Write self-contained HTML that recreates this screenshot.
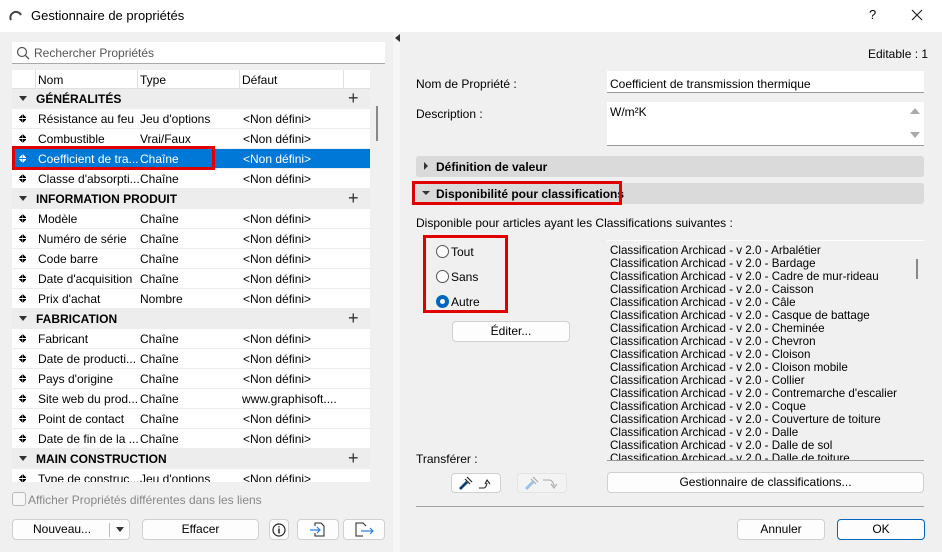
<!DOCTYPE html>
<html><head><meta charset="utf-8">
<style>
*{box-sizing:border-box;margin:0;padding:0}
body{width:942px;height:552px;overflow:hidden;background:#f0f0f0;font-family:"Liberation Sans",sans-serif;font-size:12px;color:#000;position:relative}
.a{position:absolute}
.title{left:0;top:0;width:942px;height:32px;background:#fff}
.list{left:12px;top:70px;width:358px;height:412px;background:#fff;overflow:hidden}
.hdr{position:absolute;left:0;top:0;width:358px;height:19px;background:#fff;border-bottom:1px solid #e0e0e0}
.hdr span{position:absolute;top:3px}
.hdr i{position:absolute;top:0;width:1px;height:19px;background:#e0e0e0}
.row{position:absolute;left:0;width:358px;height:20px;border-bottom:1px solid #ececec;background:#fff}
.row span{position:absolute;top:3px;white-space:nowrap}
.row .s{left:7px;top:5px;width:7px;height:9px;background:
linear-gradient(to bottom right,transparent 50%,currentColor 50%) 0 0/3.5px 4px no-repeat,
linear-gradient(to bottom left,transparent 50%,currentColor 50%) 3.5px 0/3.5px 4px no-repeat,
linear-gradient(to top right,transparent 50%,currentColor 50%) 0 5px/3.5px 4px no-repeat,
linear-gradient(to top left,transparent 50%,currentColor 50%) 3.5px 5px/3.5px 4px no-repeat}
.grp{position:absolute;left:0;width:358px;height:20px;background:#ededed;font-weight:bold}
.grp span{position:absolute;top:3px}
.grp .t{left:7px;top:7px;width:0;height:0;border-left:4px solid transparent;border-right:4px solid transparent;border-top:5px solid #333}
.grp .p{left:336px;top:-1px;font-weight:normal;font-size:18px;color:#333}
.sel{background:#0078d7;color:#fff}
.btn{position:absolute;background:#fdfdfd;border:1px solid #d0d0d0;border-radius:4px;text-align:center;line-height:19px;height:21px}
.inp{position:absolute;background:#fff;border-bottom:1px solid #999}
.bar{position:absolute;left:416px;width:508px;height:21px;background:#dadada;border-radius:3px;font-weight:bold}
.radio{position:absolute;left:436px;width:13px;height:13px;border:1px solid #555;border-radius:50%;background:#fff}
.red{position:absolute;border:3px solid #e00000}
.cl{position:absolute;left:610px;white-space:nowrap;line-height:13px;font-size:11.6px}
</style></head><body>
<div class="a title"></div>
<svg class="a" style="left:9px;top:9px" width="14" height="12"><path d="M2 11 A5.5 5.5 0 0 1 12 6" fill="none" stroke="#444" stroke-width="2"/></svg>
<div class="a" style="left:31px;top:8px;font-size:13px">Gestionnaire de propriétés</div>
<div class="a" style="left:869px;top:7px;font-size:13px">?</div>
<svg class="a" style="left:911px;top:9px" width="12" height="12"><path d="M1 1L11 11M11 1L1 11" stroke="#222" stroke-width="1.2"/></svg>

<div class="a" style="left:12px;top:42px;width:373px;height:22px;background:#fff;border-bottom:1px solid #aaa"></div>
<svg class="a" style="left:16px;top:46px" width="14" height="14"><circle cx="6" cy="6" r="4.5" fill="none" stroke="#555" stroke-width="1.2"/><path d="M9.3 9.3L13 13" stroke="#555" stroke-width="1.3"/></svg>
<div class="a" style="left:34px;top:46px;color:#555">Rechercher Propriétés</div>

<div class="a list">
<div class="hdr"><i style="left:23px"></i><span style="left:26px">Nom</span><i style="left:125px"></i><span style="left:128px">Type</span><i style="left:227px"></i><span style="left:230px">Défaut</span><i style="left:331px"></i></div>
<div class="grp" style="top:19px"><span class="t"></span><span style="left:24px">GÉNÉRALITÉS</span><span class="p">+</span></div>
<div class="row" style="top:39px"><span class="s"></span><span style="left:26px">Résistance au feu</span><span style="left:128px">Jeu d'options</span><span style="left:231px">&lt;Non défini&gt;</span></div>
<div class="row" style="top:59px"><span class="s"></span><span style="left:26px">Combustible</span><span style="left:128px">Vrai/Faux</span><span style="left:231px">&lt;Non défini&gt;</span></div>
<div class="row sel" style="top:79px"><span class="s"></span><span style="left:26px">Coefficient de tra...</span><span style="left:128px">Chaîne</span><span style="left:231px">&lt;Non défini&gt;</span></div>
<div class="row" style="top:99px"><span class="s"></span><span style="left:26px">Classe d'absorpti...</span><span style="left:128px">Chaîne</span><span style="left:231px">&lt;Non défini&gt;</span></div>
<div class="grp" style="top:119px"><span class="t"></span><span style="left:24px">INFORMATION PRODUIT</span><span class="p">+</span></div>
<div class="row" style="top:139px"><span class="s"></span><span style="left:26px">Modèle</span><span style="left:128px">Chaîne</span><span style="left:231px">&lt;Non défini&gt;</span></div>
<div class="row" style="top:159px"><span class="s"></span><span style="left:26px">Numéro de série</span><span style="left:128px">Chaîne</span><span style="left:231px">&lt;Non défini&gt;</span></div>
<div class="row" style="top:179px"><span class="s"></span><span style="left:26px">Code barre</span><span style="left:128px">Chaîne</span><span style="left:231px">&lt;Non défini&gt;</span></div>
<div class="row" style="top:199px"><span class="s"></span><span style="left:26px">Date d'acquisition</span><span style="left:128px">Chaîne</span><span style="left:231px">&lt;Non défini&gt;</span></div>
<div class="row" style="top:219px"><span class="s"></span><span style="left:26px">Prix d'achat</span><span style="left:128px">Nombre</span><span style="left:231px">&lt;Non défini&gt;</span></div>
<div class="grp" style="top:239px"><span class="t"></span><span style="left:24px">FABRICATION</span><span class="p">+</span></div>
<div class="row" style="top:259px"><span class="s"></span><span style="left:26px">Fabricant</span><span style="left:128px">Chaîne</span><span style="left:231px">&lt;Non défini&gt;</span></div>
<div class="row" style="top:279px"><span class="s"></span><span style="left:26px">Date de producti...</span><span style="left:128px">Chaîne</span><span style="left:231px">&lt;Non défini&gt;</span></div>
<div class="row" style="top:299px"><span class="s"></span><span style="left:26px">Pays d'origine</span><span style="left:128px">Chaîne</span><span style="left:231px">&lt;Non défini&gt;</span></div>
<div class="row" style="top:319px"><span class="s"></span><span style="left:26px">Site web du prod...</span><span style="left:128px">Chaîne</span><span style="left:230px">www.graphisoft....</span></div>
<div class="row" style="top:339px"><span class="s"></span><span style="left:26px">Point de contact</span><span style="left:128px">Chaîne</span><span style="left:231px">&lt;Non défini&gt;</span></div>
<div class="row" style="top:359px"><span class="s"></span><span style="left:26px">Date de fin de la ...</span><span style="left:128px">Chaîne</span><span style="left:231px">&lt;Non défini&gt;</span></div>
<div class="grp" style="top:379px"><span class="t"></span><span style="left:24px">MAIN CONSTRUCTION</span><span class="p">+</span></div>
<div class="row" style="top:399px"><span class="s"></span><span style="left:26px">Type de construc...</span><span style="left:128px">Jeu d'options</span><span style="left:231px">&lt;Non défini&gt;</span></div>
</div>
<div class="a" style="left:376px;top:106px;width:2px;height:35px;background:#888"></div>
<div class="red" style="left:12px;top:146px;width:203px;height:24px"></div>

<div class="a" style="left:12px;top:492px;width:14px;height:14px;border:1px solid #bbb;border-radius:3px;background:#f7f7f7"></div>
<div class="a" style="left:28px;top:493px;color:#888">Afficher Propriétés différentes dans les liens</div>
<div class="btn" style="left:12px;top:519px;width:118px"><span style="position:absolute;left:20px">Nouveau...</span><span style="position:absolute;left:96px;top:3px;width:1px;height:14px;background:#bbb"></span><span style="position:absolute;left:103px;top:7px;border-left:4px solid transparent;border-right:4px solid transparent;border-top:5px solid #333"></span></div>
<div class="btn" style="left:142px;top:519px;width:117px">Effacer</div>
<div class="btn" style="left:269px;top:519px;width:20px"><svg width="18" height="19" style="position:absolute;left:0;top:0"><circle cx="9" cy="10" r="6" fill="none" stroke="#222" stroke-width="1.2"/><path d="M9 8.5V13.5M9 6.2V7.4" stroke="#222" stroke-width="1.5"/></svg></div>
<div class="btn" style="left:297px;top:519px;width:42px"><svg width="40" height="19" style="position:absolute;left:0;top:0"><path d="M17 6V3H23L26 6V16H17V13" fill="none" stroke="#222"/><path d="M12 10H22M19 7L22 10L19 13" fill="none" stroke="#2a7fe0" stroke-width="1.2"/></svg></div>
<div class="btn" style="left:343px;top:519px;width:42px"><svg width="40" height="19" style="position:absolute;left:0;top:0"><path d="M22 6L19 3H12V16H19" fill="none" stroke="#222"/><path d="M17 11H29M26 8L29 11L26 14" fill="none" stroke="#2a7fe0" stroke-width="1.2"/></svg></div>

<div class="a" style="left:393px;top:32px;width:7px;height:520px;background:#f6f6f6"></div>
<div class="a" style="left:395px;top:34px;border-top:4px solid transparent;border-bottom:4px solid transparent;border-right:5px solid #333"></div>

<div class="a" style="left:868px;top:47px">Editable : 1</div>
<div class="a" style="left:416px;top:77px">Nom de Propriété :</div>
<div class="inp" style="left:607px;top:71px;width:317px;height:22px"></div>
<div class="a" style="left:610px;top:77px">Coefficient de transmission thermique</div>
<div class="a" style="left:416px;top:107px">Description :</div>
<div class="inp" style="left:607px;top:102px;width:317px;height:44px"></div>
<div class="a" style="left:610px;top:105px">W/m²K</div>
<div class="a" style="left:910px;top:108px;border-left:5px solid transparent;border-right:5px solid transparent;border-bottom:6px solid #aaa"></div>
<div class="a" style="left:910px;top:132px;border-left:5px solid transparent;border-right:5px solid transparent;border-top:6px solid #aaa"></div>

<div class="bar" style="top:156px"><span style="position:absolute;left:8px;top:6px;border-top:4px solid transparent;border-bottom:4px solid transparent;border-left:4px solid #333"></span><span style="position:absolute;left:20px;top:4px">Définition de valeur</span></div>
<div class="bar" style="top:183px"><span style="position:absolute;left:6px;top:8px;border-left:4px solid transparent;border-right:4px solid transparent;border-top:4px solid #333"></span><span style="position:absolute;left:20px;top:4px">Disponibilité pour classifications</span></div>
<div class="red" style="left:412px;top:181px;width:210px;height:24px"></div>
<div class="a" style="left:416px;top:216px">Disponible pour articles ayant les Classifications suivantes :</div>

<div class="radio" style="top:245px"></div><div class="a" style="left:451px;top:245px">Tout</div>
<div class="radio" style="top:270px"></div><div class="a" style="left:451px;top:270px">Sans</div>
<div class="radio" style="top:295px;background:#0067c0;border-color:#0067c0"><span style="position:absolute;left:3px;top:3px;width:5px;height:5px;border-radius:50%;background:#fff"></span></div><div class="a" style="left:451px;top:295px">Autre</div>
<div class="red" style="left:423px;top:235px;width:85px;height:78px"></div>
<div class="btn" style="left:452px;top:321px;width:118px">Éditer...</div>

<div class="a" style="left:607px;top:240px;width:317px;height:221px;border-bottom:1px solid #999;border-top:1px solid #fff;overflow:hidden">
<div class="a" style="left:309px;top:18px;width:2px;height:20px;background:#888"></div>
</div>
<div class="a" style="left:607px;top:243px;width:300px;height:217px;overflow:hidden">
<div class="cl" style="left:3px;top:1px">Classification Archicad - v 2.0 - Arbalétier<br>Classification Archicad - v 2.0 - Bardage<br>Classification Archicad - v 2.0 - Cadre de mur-rideau<br>Classification Archicad - v 2.0 - Caisson<br>Classification Archicad - v 2.0 - Câle<br>Classification Archicad - v 2.0 - Casque de battage<br>Classification Archicad - v 2.0 - Cheminée<br>Classification Archicad - v 2.0 - Chevron<br>Classification Archicad - v 2.0 - Cloison<br>Classification Archicad - v 2.0 - Cloison mobile<br>Classification Archicad - v 2.0 - Collier<br>Classification Archicad - v 2.0 - Contremarche d'escalier<br>Classification Archicad - v 2.0 - Coque<br>Classification Archicad - v 2.0 - Couverture de toiture<br>Classification Archicad - v 2.0 - Dalle<br>Classification Archicad - v 2.0 - Dalle de sol<br>Classification Archicad - v 2.0 - Dalle de toiture</div>
</div>

<div class="a" style="left:416px;top:452px">Transférer :</div>
<div class="btn" style="left:451px;top:473px;width:50px;height:20px"><svg width="48" height="18" style="position:absolute;left:0;top:0"><path d="M8 15L15 8" stroke="#1a5fc0" stroke-width="3"/><path d="M8 15L15 8M13 5L18 10M15 3L20 8" stroke="#222" stroke-width="1.2" fill="none"/><path d="M27 14H32Q34 14 35 9M33 10L35 6L38 10" stroke="#222" stroke-width="1.1" fill="none"/></svg></div>
<div class="btn" style="left:517px;top:473px;width:50px;height:20px;background:#f3f3f3;border-color:#e4e4e4"><svg width="48" height="18" style="position:absolute;left:0;top:0"><path d="M8 15L15 8" stroke="#9cc0ee" stroke-width="3"/><path d="M13 5L18 10M15 3L20 8" stroke="#aaa" stroke-width="1.2"/><path d="M25 6H31Q35 6 36 12M33 10L36 14L39 10" stroke="#aaa" stroke-width="1.1" fill="none"/></svg></div>
<div class="btn" style="left:607px;top:472px;width:317px;height:21px">Gestionnaire de classifications...</div>
<div class="a" style="left:416px;top:506px;width:508px;height:1px;background:#a0a0a0"></div>
<div class="btn" style="left:737px;top:519px;width:88px">Annuler</div>
<div class="btn" style="left:837px;top:519px;width:88px;border:1px solid #0067c0">OK</div>
</body></html>
